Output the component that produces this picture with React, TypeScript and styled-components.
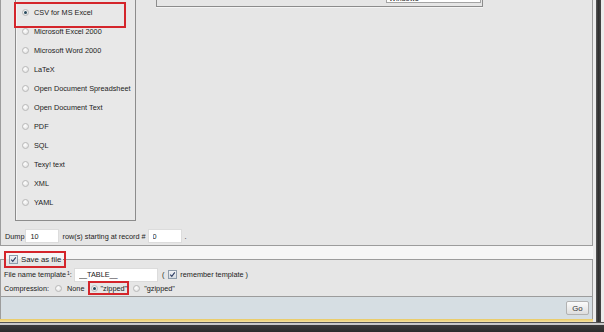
import React from "react";
import styled, { createGlobalStyle, css } from "styled-components";

const Global = createGlobalStyle`
  html, body { margin: 0; padding: 0; background: #e9e9e9; }
  body { font-family: "Liberation Sans", Arial, sans-serif; }
  * { box-sizing: border-box; }
`;

const Screen = styled.div`
  width: 604px;
  height: 332px;
  overflow: hidden;
  display: flex;
  flex-direction: column;
  background: #e9e9e9;
  font-size: 7.3px;
  color: #222;
`;

const Upper = styled.div`
  display: flex;
  height: 322px;
`;

const Window = styled.div`
  width: 593px;
  display: flex;
  flex-direction: column;
  background: #f6f6f6;
`;

const Gutter = styled.div`
  width: 11px;
  display: flex;
  padding-left: 3px;
  background: #ececec;
`;

const ShadowStrip = styled.div`
  width: 5px;
  background: linear-gradient(90deg, #5a5a5a, #2e2e2e 45%, #474747);
`;

const BottomShadow = styled.div`
  height: 10px;
  background: linear-gradient(
    #555 0,
    #555 1px,
    #c9c9c9 1px,
    #c9c9c9 3px,
    #3c3c3c 3px,
    #2c2c2c 100%
  );
`;

const OptionsPanel = styled.div`
  height: 246px;
  background: #e6e6e6;
  border-left: 1px solid #9c9c9c;
  border-right: 1px solid #9c9c9c;
  border-bottom: 1px solid #9c9c9c;
  padding-bottom: 2px;
  display: flex;
  flex-direction: column;
`;

const TopRow = styled.div`
  display: flex;
  align-items: flex-start;
  padding-left: 14px;
`;

const FormatList = styled.div`
  width: 121px;
  margin-top: -6px;
  padding: 7.5px 0;
  border: 1px solid #8c8c8c;
  box-shadow: inset 1px 1px 0 #f4f4f4;
  background: #e8e8e8;
  display: flex;
  flex-direction: column;
`;

const FormatRow = styled.label<{ $highlight?: boolean }>`
  position: relative;
  height: 19.1px;
  display: flex;
  align-items: center;
  gap: 5.5px;
  padding-left: 5.5px;
  white-space: nowrap;
  ${(p) =>
    p.$highlight &&
    css`
      &::after {
        content: "";
        position: absolute;
        left: -2px;
        top: -0.5px;
        width: 108px;
        height: 22px;
        border: 2px solid #d4252b;
      }
    `}
`;

const Radio = styled.span<{ $checked?: boolean }>`
  width: 7px;
  height: 7px;
  flex: none;
  border-radius: 50%;
  border: 1px solid #b9b9b9;
  background: radial-gradient(circle at 40% 35%, #ffffff, #dcdcdc);
  display: flex;
  align-items: center;
  justify-content: center;
  ${(p) =>
    p.$checked &&
    css`
      &::before {
        content: "";
        width: 3px;
        height: 3px;
        border-radius: 50%;
        background: #27495c;
      }
    `}
`;

const MiddlePanel = styled.div`
  margin-left: 20px;
  margin-top: -30px;
  width: 327px;
  height: 37px;
  border: 1px solid #8c8c8c;
  box-shadow: 0 1px 0 #f4f4f4;
  display: flex;
  justify-content: flex-end;
  align-items: flex-end;
  padding: 0 1px 3px 0;
`;

const OsBox = styled.div`
  width: 95px;
  height: 30px;
  background: #ffffff;
  border: 1px solid #a4a4a4;
  display: flex;
  align-items: flex-end;
  padding: 0 0 0 2px;
  line-height: 7px;
`;

const DumpRow = styled.div`
  display: flex;
  align-items: center;
  height: 14px;
  margin-top: 8px;
  padding-left: 4px;
  white-space: nowrap;
`;

const TextInput = styled.input<{ $w: number; $ml?: number; $mr?: number }>`
  width: ${(p) => p.$w}px;
  height: 14px;
  margin: 0 ${(p) => p.$mr ?? 3}px 0 ${(p) => p.$ml ?? 2}px;
  padding: 0 0 0 4px;
  border: 1px solid #dcdcdc;
  background: #ffffff;
  font: inherit;
  color: #222;
  outline: none;
`;

const SaveFieldset = styled.fieldset`
  margin: 5px 0 0;
  padding: 0 0 0 2px;
  min-width: 0;
  height: 46px;
  border: 1px solid #9c9c9c;
  background: #e6e6e6;
  display: flex;
  flex-direction: column;
`;

const SaveLegend = styled.legend`
  margin-left: 1px;
  width: 62px;
  height: 17px;
  padding: 0 0 0 3px;
  border: 2px solid #d4252b;
  display: flex;
  align-items: center;
  gap: 3px;
  white-space: nowrap;
  font-size: 7.8px;
`;

const LegendDash = styled.span`
  width: 4px;
  height: 1px;
  margin-left: -1px;
  background: #7a7a7a;
`;

const Box = styled.span`
  width: 9px;
  height: 9px;
  flex: none;
  border: 1px solid #8e9cab;
  background: linear-gradient(#f1f3f6, #d5dbe2);
  display: flex;
  align-items: center;
  justify-content: center;
`;

const FileRow = styled.div`
  height: 13px;
  display: flex;
  align-items: center;
  padding-left: 1px;
  white-space: nowrap;
`;

const Sup = styled.sup`
  font-size: 5px;
  vertical-align: top;
  line-height: 5px;
  margin: -2px 0 0 1px;
`;

const Paren = styled.span<{ $ml?: number; $mr?: number }>`
  margin-left: ${(p) => p.$ml ?? 0}px;
  margin-right: ${(p) => p.$mr ?? 0}px;
`;

const CompressionRow = styled.div`
  height: 14px;
  display: flex;
  align-items: center;
  padding-left: 1px;
  white-space: nowrap;
`;

const Choice = styled.span<{ $ml: number; $gap: number }>`
  display: flex;
  align-items: center;
  margin-left: ${(p) => p.$ml}px;
  gap: ${(p) => p.$gap}px;
`;

const Highlight = styled.span`
  display: flex;
  align-items: center;
  height: 14px;
  margin-left: 4px;
  padding-left: 0.5px;
  gap: 2.5px;
  border: 2px solid #d4252b;
`;

const ActionBar = styled.div`
  height: 22px;
  background: #d6dee3;
  border-left: 1px solid #9c9c9c;
  border-right: 1px solid #9c9c9c;
  display: flex;
  justify-content: flex-end;
  align-items: center;
  padding-right: 3px;
`;

const GoButton = styled.button`
  width: 23px;
  height: 14px;
  padding: 0;
  border: 1px solid #b2b2b2;
  border-radius: 2px;
  background: linear-gradient(#fbfbfb, #dedede);
  font-family: "Liberation Sans", Arial, sans-serif;
  font-size: 7.8px;
  color: #333;
`;

const YellowEdge = styled.div`
  height: 3px;
  background: linear-gradient(#e8c860, #f7e4a6);
`;

const Check = () => (
  <svg width="7" height="7" viewBox="0 0 7 7">
    <path d="M1.2 3.6 L2.8 5.3 L5.8 1.4" fill="none" stroke="#2d3d63" strokeWidth="1.1" />
  </svg>
);

const formats = [
  "CSV for MS Excel",
  "Microsoft Excel 2000",
  "Microsoft Word 2000",
  "LaTeX",
  "Open Document Spreadsheet",
  "Open Document Text",
  "PDF",
  "SQL",
  "Texy! text",
  "XML",
  "YAML",
];

export default function App() {
  return (
    <>
      <Global />
      <Screen>
        <Upper>
          <Window>
            <OptionsPanel>
              <TopRow>
                <FormatList>
                  {formats.map((f, i) => (
                    <FormatRow key={f} $highlight={i === 0}>
                      <Radio $checked={i === 0} />
                      {f}
                    </FormatRow>
                  ))}
                </FormatList>
                <MiddlePanel>
                  <OsBox>Windows</OsBox>
                </MiddlePanel>
              </TopRow>
              <DumpRow>
                Dump
                <TextInput $w={34} $ml={1} defaultValue="10" readOnly />
                row(s) starting at record #
                <TextInput $w={34} defaultValue="0" readOnly />
                .
              </DumpRow>
            </OptionsPanel>
            <SaveFieldset>
              <SaveLegend>
                <Box>
                  <Check />
                </Box>
                Save as file
                <LegendDash />
              </SaveLegend>
              <FileRow>
                File name template<Sup>1</Sup>:
                <TextInput $w={84} $ml={2} $mr={4} defaultValue="__TABLE__" readOnly />
                <Paren $mr={4}>(</Paren>
                <Box>
                  <Check />
                </Box>
                <Paren $ml={3}>remember template )</Paren>
              </FileRow>
              <CompressionRow>
                Compression:
                <Choice $ml={5.5} $gap={5.5}>
                  <Radio />
                  None
                </Choice>
                <Highlight>
                  <Radio $checked />
                  "zipped"
                </Highlight>
                <Choice $ml={3.5} $gap={4.5}>
                  <Radio />
                  "gzipped"
                </Choice>
              </CompressionRow>
            </SaveFieldset>
            <ActionBar>
              <GoButton>Go</GoButton>
            </ActionBar>
            <YellowEdge />
          </Window>
          <Gutter>
            <ShadowStrip />
          </Gutter>
        </Upper>
        <BottomShadow />
      </Screen>
    </>
  );
}
